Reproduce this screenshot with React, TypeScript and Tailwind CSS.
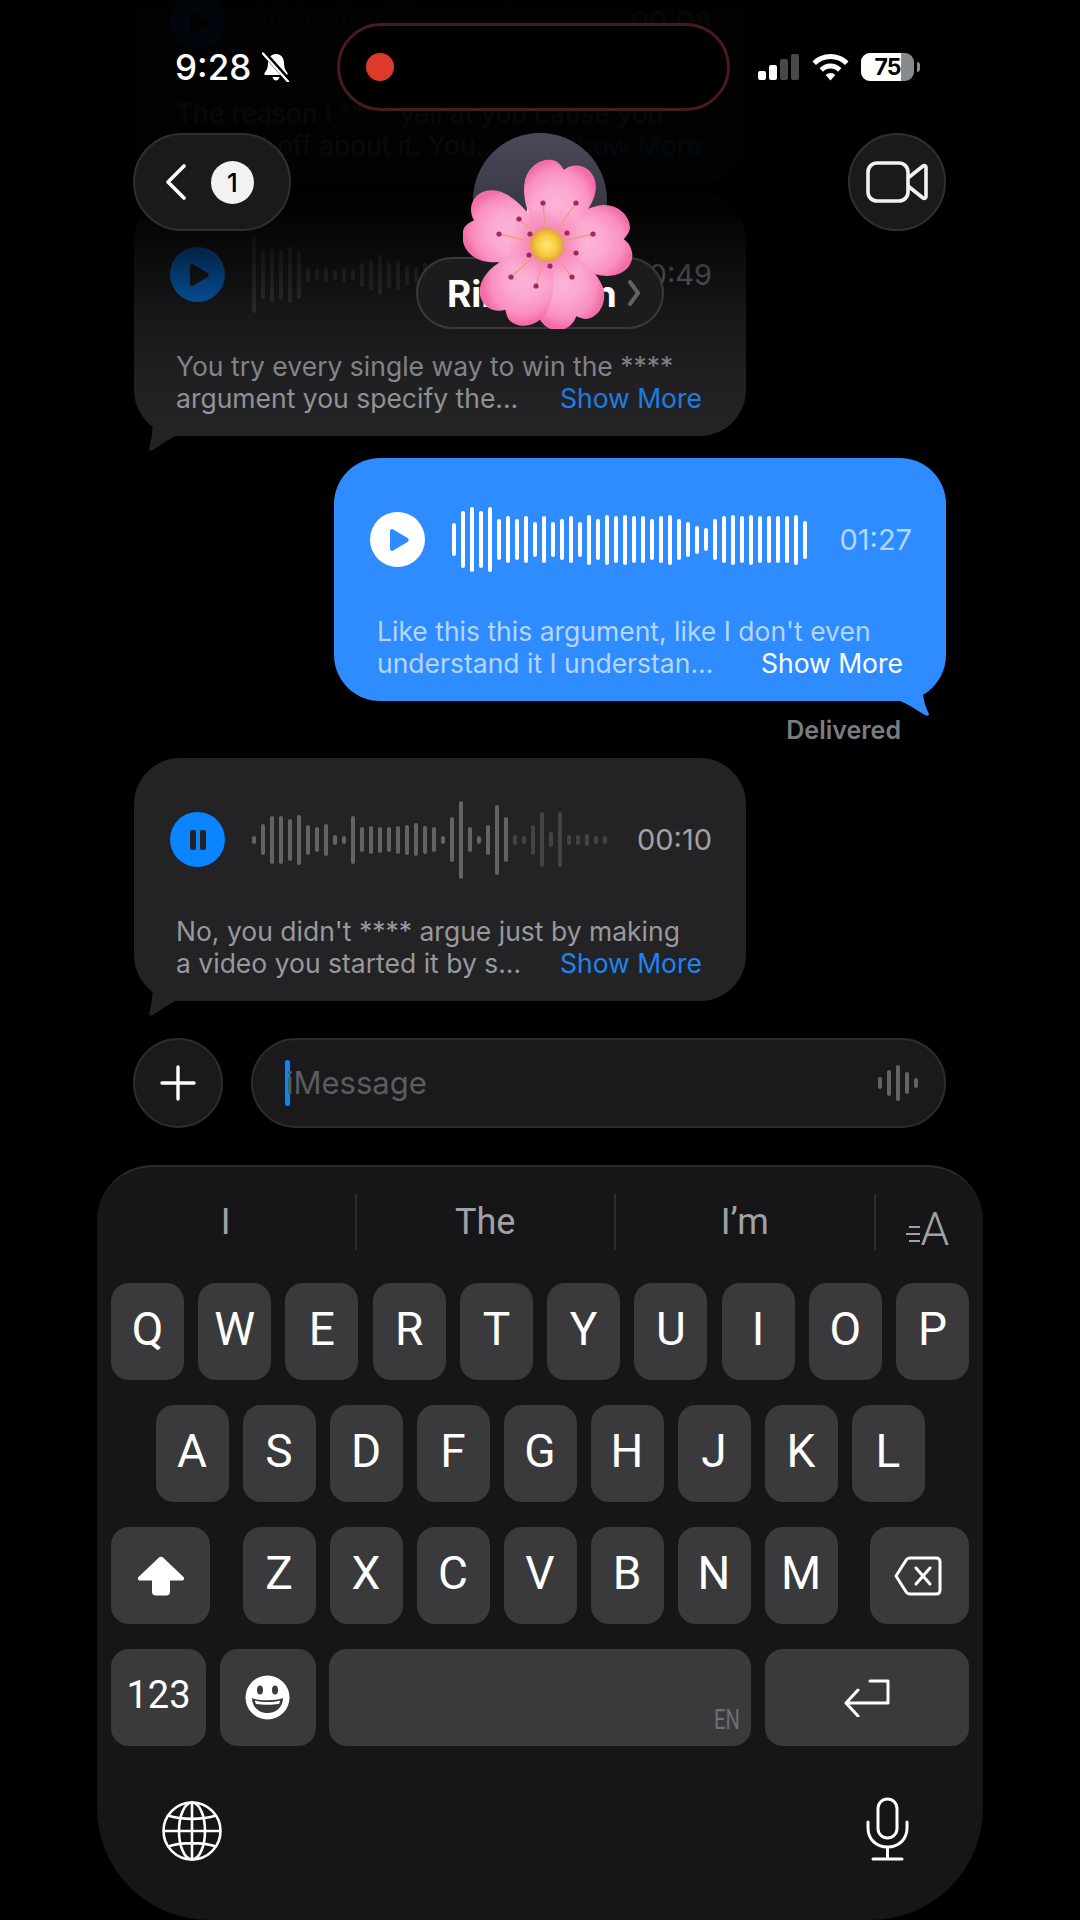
import React from 'react';

const WAVE_TOP = [18, 30, 24, 40, 22, 60, 18, 12, 10, 16, 70, 18, 12, 26, 14, 40, 30, 48, 22, 16, 14, 22, 12, 10, 16, 14, 10, 20, 48, 12, 10, 8, 12, 26, 10, 8, 8, 6];
const WAVE_DIM = [77, 48, 54, 50, 56, 48, 14, 12, 14, 10, 14, 12, 24, 30, 40, 26, 30, 20, 16, 24, 18, 14, 12, 22, 14, 16, 12, 18, 10, 14, 12, 20, 12, 14, 10, 14, 10, 12, 8, 8];
const WAVE_BLUE = [33, 57, 65, 57, 65, 41, 47, 41, 47, 35, 47, 35, 41, 47, 35, 50, 41, 50, 47, 50, 47, 47, 41, 47, 50, 41, 35, 28, 23, 41, 47, 50, 47, 50, 47, 47, 47, 47, 50, 38];
const WAVE_GREY = [8, 31, 48, 48, 42, 50, 30, 25, 32, 10, 8, 48, 25, 28, 26, 25, 28, 30, 33, 28, 25, 8, 45, 78, 25, 8, 30, 70, 45, 10, 8, 30, 55, 15, 55, 10, 10, 12, 8, 8];

function Waveform({ bars, barClass, fadeFrom }: { bars: number[]; barClass: string; fadeFrom?: number }) {
  return (
    <div className="flex items-center gap-[5px]">
      {bars.map((h, i) => (
        <div
          key={i}
          className={`w-[4px] shrink-0 rounded-full ${barClass} ${fadeFrom !== undefined && i >= fadeFrom ? 'opacity-50' : ''}`}
          style={{ height: h }}
        />
      ))}
    </div>
  );
}

function Tail({ side, colorClass }: { side: 'left' | 'right'; colorClass: string }) {
  if (side === 'left') {
    return (
      <svg className={`absolute left-[12px] bottom-[-15px] ${colorClass}`} width="34" height="40" viewBox="0 0 34 40" fill="currentColor">
        <path d="M6 0 C8 12 6 28 3 38 C3 40 5 40 7 39 C14 35 22 28 30 25 L34 0 Z" />
      </svg>
    );
  }
  return (
    <svg className={`absolute right-[14px] bottom-[-15px] ${colorClass}`} width="34" height="40" viewBox="0 0 34 40" fill="currentColor">
      <path d="M30 0 C26 8 24 16 26 24 C27 30 30 36 31 38 C31 40 29 40 27 39 C20 35 12 29 2 25 L0 0 Z" />
    </svg>
  );
}

function PlayIcon() {
  return (
    <svg width="22" height="24" viewBox="0 0 22 24" fill="currentColor">
      <path d="M2 3.2 C2 1.4 3.8 .6 5.2 1.4 L19.6 10 C21 10.9 21 13 19.6 13.9 L5.2 22.6 C3.8 23.4 2 22.6 2 20.8 Z" />
    </svg>
  );
}

function GreyBubble({
  bars,
  time,
  line1,
  line2,
  button,
  heightClass,
  fadeFrom,
  tail = true,
}: {
  bars: number[];
  time: string;
  line1: string;
  line2: string;
  button: React.ReactNode;
  heightClass: string;
  fadeFrom?: number;
  tail?: boolean;
}) {
  return (
    <div className={`relative w-[612px] ${heightClass} rounded-[46px] bg-[#232326] pl-[36px] pr-[34px] flex flex-col`}>
      <div className="flex items-center h-[163px]">
        {button}
        <div className="ml-[27px] w-[360px] overflow-hidden">
          <Waveform bars={bars} barClass="bg-[#636366]" fadeFrom={fadeFrom} />
        </div>
        <span className="ml-auto text-[29px] text-[#a1a1a6]">{time}</span>
      </div>
      <div className="pl-[6px] text-[26.5px] leading-[32px] text-[#98989d] mt-[-6px]">
        <div className="whitespace-nowrap">{line1}</div>
        <div className="flex justify-between pr-[10px] whitespace-nowrap">
          <span>{line2}</span>
          <span className="text-[#1f84f0]">Show More</span>
        </div>
      </div>
      {tail && <Tail side="left" colorClass="text-[#232326]" />}
    </div>
  );
}

function Flower() {
  // one petal pointing up from the centre, with a notch at the tip
  const petal = 'M0 4 C-10 -8 -36 -34 -35 -60 C-34 -76 -20 -86 -9 -84 C-5 -83 -2 -80 1 -77 C5 -82 12 -85 19 -84 C31 -82 38 -70 36 -56 C33 -34 12 -10 0 4 Z';
  const tips = [
    [-4, -42], [29, -42], [-28, -26], [-48, -11], [-17, -11], [20, -12], [46, -11],
    [29, 8], [-36, 32], [-11, 41], [25, 32], [3, 21], [-18, 10],
  ];
  return (
    <svg className="absolute left-[463px] top-[159px]" width="172" height="170" viewBox="-84 -86 172 170">
      <defs>
        <radialGradient id="petalFill" cx="0.5" cy="0.58" r="0.6">
          <stop offset="0" stopColor="#fdb6d8" />
          <stop offset="0.5" stopColor="#fca8d0" />
          <stop offset="0.82" stopColor="#f98fc0" />
          <stop offset="1" stopColor="#f36ea8" />
        </radialGradient>
        <radialGradient id="eyeFill">
          <stop offset="0" stopColor="#ffe873" />
          <stop offset="0.6" stopColor="#f6cb3d" />
          <stop offset="1" stopColor="#e0a040" />
        </radialGradient>
        <radialGradient id="baseShade">
          <stop offset="0" stopColor="#f0589a" stopOpacity="0.75" />
          <stop offset="1" stopColor="#f0589a" stopOpacity="0" />
        </radialGradient>
      </defs>
      {[288, 85, 157, 212, 12].map((a) => (
        <g key={a} transform={`rotate(${a})`}>
          <path d={petal} fill="url(#petalFill)" />
        </g>
      ))}
      <circle cx="0" cy="0" r="40" fill="url(#baseShade)" />
      {tips.map(([x, y], i) => (
        <g key={i}>
          <line x1="0" y1="0" x2={x} y2={y} stroke="#ee9a7e" strokeWidth="1.3" />
          <circle cx={x} cy={y} r="2.6" fill="#a2275f" />
        </g>
      ))}
      <circle cx="0" cy="0" r="17" fill="url(#eyeFill)" />
    </svg>
  );
}

function StatusBar() {
  return (
    <div className="absolute top-[23px] left-0 right-0 flex items-center h-[88px]">
      <div className="w-[337px] pl-[175px] flex items-center text-white">
        <span className="text-[35px] font-medium leading-none">9:28</span>
        <svg className="ml-[11px]" width="28" height="30" viewBox="0 0 28 30" fill="white">
          <path d="M14 2 C8.5 2 6 6.5 6 11 C6 15.5 5 18 2.5 21 C2 22 2.5 23 3.5 23 H24.5 C25.5 23 26 22 25.5 21 C23 18 22 15.5 22 11 C22 6.5 19.5 2 14 2 Z" />
          <path d="M10.5 25 H17.5 C17 27.5 15.5 28.5 14 28.5 C12.5 28.5 11 27.5 10.5 25 Z" />
          <path d="M2 1 L27 29" stroke="black" strokeWidth="5" />
          <path d="M1 1.5 L26 29.5" stroke="white" strokeWidth="2.4" strokeLinecap="round" />
        </svg>
      </div>
      <div className="w-[393px] h-[88px] rounded-full bg-black border-[3px] border-[#4a1a1e] flex items-center pl-[26px]">
        <div className="w-[28px] h-[28px] rounded-full bg-[#dd3a2c]" />
      </div>
      <div className="ml-[28px] flex items-center">
        <div className="flex items-end gap-[3px] h-[26px]">
          <div className="w-[8px] h-[9px] rounded-[2px] bg-white" />
          <div className="w-[8px] h-[15px] rounded-[2px] bg-white" />
          <div className="w-[8px] h-[21px] rounded-[2px] bg-[#48484a]" />
          <div className="w-[8px] h-[26px] rounded-[2px] bg-[#48484a]" />
        </div>
        <svg className="ml-[13px]" width="37" height="27" viewBox="0 0 37 27" fill="white">
          <path d="M18.5 0 C25.5 0 32 2.8 36.5 7.4 L33 11 C29.3 7.2 24.2 5 18.5 5 C12.8 5 7.7 7.2 4 11 L.5 7.4 C5 2.8 11.5 0 18.5 0 Z" />
          <path d="M18.5 9.6 C22.8 9.6 26.6 11.3 29.4 14.2 L26 17.7 C24.1 15.7 21.4 14.5 18.5 14.5 C15.6 14.5 12.9 15.7 11 17.7 L7.6 14.2 C10.4 11.3 14.2 9.6 18.5 9.6 Z" />
          <path d="M18.5 19 C20.4 19 22.1 19.8 23.3 21 L18.5 26.6 L13.7 21 C14.9 19.8 16.6 19 18.5 19 Z" />
        </svg>
        <div className="ml-[12px] relative w-[53px] h-[28px] rounded-[9px] bg-[#8a8a8e] overflow-hidden">
          <div className="absolute inset-y-0 left-0 w-[40px] bg-white" />
          <span className="absolute inset-0 flex items-center justify-center text-[23px] font-bold text-black leading-none tracking-[-1px]">75</span>
        </div>
        <div className="ml-[3px] w-[3px] h-[10px] rounded-r-full bg-[#8a8a8e]" />
      </div>
    </div>
  );
}

function NavBar() {
  return (
    <div className="absolute top-[133px] left-[133px] right-[134px] flex justify-between">
      <div className="w-[158px] h-[98px] rounded-full bg-[#1a1a1c] border-[2px] border-[#2f2f31] flex items-center pl-[30px]">
        <svg width="22" height="36" viewBox="0 0 22 36" fill="none" stroke="white" strokeWidth="3.6" strokeLinecap="round" strokeLinejoin="round">
          <path d="M19 2 L3 18 L19 34" />
        </svg>
        <div className="ml-[24px] w-[43px] h-[43px] rounded-full bg-[#f2f2f2] flex items-center justify-center text-[26px] text-black font-medium">1</div>
      </div>
      <div className="w-[98px] h-[98px] rounded-full bg-[#1a1a1c] border-[2px] border-[#2f2f31] flex items-center justify-center">
        <svg width="62" height="42" viewBox="0 0 62 42" fill="none" stroke="#f2f2f2" strokeWidth="3.6" strokeLinejoin="round">
          <rect x="2" y="2" width="40" height="38" rx="9" />
          <path d="M42 17 L57 5 C58.5 4 60 5 60 6.5 V35.5 C60 37 58.5 38 57 37 L42 25" />
        </svg>
      </div>
    </div>
  );
}

function Key({ label }: { label: string }) {
  return (
    <div className="w-[73px] h-[97px] pb-[6px] rounded-[18px] bg-[#3a3a3c] flex items-center justify-center text-[46px] text-white leading-none shrink-0">
      {label}
    </div>
  );
}

function IconKey({ className, children }: { className: string; children: React.ReactNode }) {
  return (
    <div className={`${className} relative h-[97px] rounded-[18px] bg-[#3a3a3c] flex items-center justify-center text-white shrink-0`}>
      {children}
    </div>
  );
}

function Keyboard() {
  return (
    <div className="mt-[37px] mx-auto w-[886px] flex-1 rounded-t-[56px] rounded-b-[112px] bg-[#161618] border-t-[2px] border-[#2c2c2e] font-['Roboto',sans-serif]">
      <div className="flex items-center pt-[26px] h-[83px] text-[36px] text-[#a1a1a6]">
        {['I', 'The', 'I’m'].map((w) => (
          <div key={w} className="w-[259.5px] h-[56px] border-r-[2px] border-[#2c2c2e] flex items-center justify-center">{w}</div>
        ))}
        <div className="ml-[30px] flex items-end mt-[14px]">
          <div className="flex flex-col gap-[5px] mb-[5px] mr-[1px]">
            <div className="w-[11px] h-[2px] ml-[3px] bg-[#a1a1a6]" />
            <div className="w-[14px] h-[2px] bg-[#a1a1a6]" />
            <div className="w-[11px] h-[2px] ml-[3px] bg-[#a1a1a6]" />
          </div>
          <span className="text-[46px] leading-[36px] font-light">A</span>
        </div>
      </div>
      <div className="px-[14px] pt-[33px] flex flex-col gap-[25px]">
        <div className="flex justify-between">
          {'QWERTYUIOP'.split('').map((k) => <Key key={k} label={k} />)}
        </div>
        <div className="flex justify-center gap-[14px]">
          {'ASDFGHJKL'.split('').map((k) => <Key key={k} label={k} />)}
        </div>
        <div className="flex justify-between">
          <IconKey className="w-[99px]">
            <svg width="48" height="40" viewBox="0 0 48 40" fill="white">
              <path d="M22 1.5 C23 .4 25 .4 26 1.5 L46.5 21 C47.8 22.3 47 24.5 45 24.5 H33 V36 C33 38 31.5 39.5 29.5 39.5 H18.5 C16.5 39.5 15 38 15 36 V24.5 H3 C1 24.5 .2 22.3 1.5 21 Z" />
            </svg>
          </IconKey>
          <div className="flex gap-[14px]">
            {'ZXCVBNM'.split('').map((k) => <Key key={k} label={k} />)}
          </div>
          <IconKey className="w-[99px]">
            <svg className="mr-[4px]" width="48" height="40" viewBox="0 0 48 40" fill="none" stroke="white" strokeWidth="3" strokeLinecap="round" strokeLinejoin="round">
              <path d="M16 2 H42 C44.5 2 46 3.5 46 6 V34 C46 36.5 44.5 38 42 38 H16 C14.5 38 13.5 37.5 12.5 36.5 L2 20 L12.5 3.5 C13.5 2.5 14.5 2 16 2 Z" />
              <path d="M22 12 L36 28 M36 12 L22 28" />
            </svg>
          </IconKey>
        </div>
        <div className="flex justify-between">
          <div className="w-[95px] h-[97px] pb-[4px] rounded-[18px] bg-[#3a3a3c] flex items-center justify-center text-[38px] text-white">123</div>
          <IconKey className="w-[96px]">
            <svg width="45" height="45" viewBox="0 0 45 45">
              <circle cx="22.5" cy="22.5" r="22" fill="white" />
              <ellipse cx="15" cy="15" rx="3" ry="4.5" fill="#3a3a3c" />
              <ellipse cx="30" cy="15" rx="3" ry="4.5" fill="#3a3a3c" />
              <path d="M7 23 C14 26 31 26 38 23 C38 32 31 38 22.5 38 C14 38 7 32 7 23 Z" fill="#3a3a3c" />
              <path d="M10 25.5 C17 27.5 28 27.5 35 25.5 C35 27 34.5 28 34 29 C27 30 18 30 11 29 C10.5 28 10 27 10 25.5 Z" fill="white" />
            </svg>
          </IconKey>
          <div className="relative w-[422px] h-[97px] rounded-[18px] bg-[#3a3a3c]">
            <span className="absolute right-[6px] bottom-[12px] text-[28px] leading-none text-[#6e6e73] scale-x-[0.72]">EN</span>
          </div>
          <IconKey className="w-[204px]">
            <svg width="46" height="38" viewBox="0 0 46 38" fill="none" stroke="white" strokeWidth="3" strokeLinecap="round" strokeLinejoin="round">
              <path d="M26 2 H44 V24 H2 M14 11 L2 24 L14 37" />
            </svg>
          </IconKey>
        </div>
      </div>
      <div className="flex justify-between items-start pl-[65px] pr-[74px] mt-[51px]">
        <svg className="mt-[4px]" width="60" height="60" viewBox="0 0 60 60" fill="none" stroke="white" strokeWidth="2.6">
          <circle cx="30" cy="30" r="28.5" />
          <ellipse cx="30" cy="30" rx="13" ry="28.5" />
          <path d="M30 1.5 V58.5 M1.5 30 H58.5 M6 14.5 C20 19 40 19 54 14.5 M6 45.5 C20 41 40 41 54 45.5" />
        </svg>
        <svg width="43" height="64" viewBox="0 0 43 64" fill="none" stroke="white" strokeWidth="3" strokeLinecap="round">
          <rect x="12" y="2" width="19" height="39" rx="9.5" />
          <path d="M2 25 V31 C2 42 10 50 21.5 50 C33 50 41 42 41 31 V25 M21.5 50 V61 M7 62 H36" />
        </svg>
      </div>
    </div>
  );
}

export default function App() {
  return (
    <div className="relative w-[1080px] h-[1920px] overflow-hidden bg-black flex flex-col font-['Inter','Liberation_Sans',sans-serif]">
      <div className="pl-[134px] pr-[134px] mt-[-60px] flex flex-col">
        <GreyBubble
          bars={WAVE_TOP}
          time="00:08"
          line1="The reason I **** yell at you cause you"
          line2="you get off about it. You..."
          heightClass="h-[243px]"
          fadeFrom={0}
          tail={false}
          button={
            <div className="w-[55px] h-[55px] shrink-0 rounded-full bg-[#0a84ff] flex items-center justify-center text-[#232326] pl-[3px]">
              <PlayIcon />
            </div>
          }
        />
        <div className="mt-[10px]">
          <GreyBubble
            bars={WAVE_DIM}
            time="00:49"
            line1="You try every single way to win the ****"
            line2="argument you specify the..."
            heightClass="h-[243px]"
            fadeFrom={0}
            button={
              <div className="w-[55px] h-[55px] shrink-0 rounded-full bg-[#0a84ff] flex items-center justify-center text-[#232326] pl-[3px]">
                <PlayIcon />
              </div>
            }
          />
        </div>

        <div className="relative self-end w-[612px] h-[243px] mt-[22px] rounded-[46px] bg-[#2f8cff] pl-[36px] pr-[34px] flex flex-col">
          <div className="flex items-center h-[163px]">
            <div className="w-[55px] h-[55px] shrink-0 rounded-full bg-white flex items-center justify-center text-[#2f8cff] pl-[3px]">
              <PlayIcon />
            </div>
            <div className="ml-[27px]">
              <Waveform bars={WAVE_BLUE} barClass="bg-white" />
            </div>
            <span className="ml-auto text-[29px] text-[#b5d6ff]">01:27</span>
          </div>
          <div className="pl-[7px] text-[26.5px] leading-[32px] text-[#b5d6ff] mt-[-6px]">
            <div className="whitespace-nowrap">Like this this argument, like I don't even</div>
            <div className="flex justify-between pr-[9px] whitespace-nowrap">
              <span>understand it I understan...</span>
              <span className="text-white">Show More</span>
            </div>
          </div>
          <Tail side="right" colorClass="text-[#2f8cff]" />
        </div>
        <div className="self-end pr-[45px] mt-[16px] h-[41px] text-[25px] font-semibold text-[#7c7c80] leading-[26px]">Delivered</div>

        <GreyBubble
          bars={WAVE_GREY}
          time="00:10"
          line1="No, you didn't **** argue just by making"
          line2="a video you started it by s..."
          heightClass="h-[243px]"
          fadeFrom={29}
          button={
            <div className="w-[55px] h-[55px] shrink-0 rounded-full bg-[#0a84ff] flex items-center justify-center gap-[4px]">
              <div className="w-[6px] h-[20px] rounded-[2px] bg-[#232326]" />
              <div className="w-[6px] h-[20px] rounded-[2px] bg-[#232326]" />
            </div>
          }
        />
      </div>

      <div className="pl-[133px] pr-[134px] mt-[37px] flex gap-[28px]">
        <div className="w-[90px] h-[90px] rounded-full bg-[#1a1a1c] border-[2px] border-[#2c2c2e] flex items-center justify-center shrink-0">
          <svg width="36" height="36" viewBox="0 0 36 36" stroke="white" strokeWidth="3.4" strokeLinecap="round">
            <path d="M18 2 V34 M2 18 H34" />
          </svg>
        </div>
        <div className="flex-1 h-[90px] rounded-full bg-[#1a1a1c] border-[2px] border-[#2c2c2e] flex items-center pl-[32px] pr-[26px]">
          <div className="w-[5px] h-[46px] rounded-full bg-[#0a84ff]" />
          <span className="text-[31px] text-[#5c5c60] ml-[-4px]">iMessage</span>
          <div className="ml-auto flex items-center gap-[5px]">
            <div className="w-[4px] h-[12px] rounded-full bg-[#636366]" />
            <div className="w-[4px] h-[26px] rounded-full bg-[#636366]" />
            <div className="w-[4px] h-[36px] rounded-full bg-[#636366]" />
            <div className="w-[4px] h-[22px] rounded-full bg-[#636366]" />
            <div className="w-[4px] h-[10px] rounded-full bg-[#636366]" />
          </div>
        </div>
      </div>

      <Keyboard />

      {/* top fade over the scrolled messages */}
      <div className="absolute top-0 left-0 right-0 h-[420px] bg-[linear-gradient(to_bottom,rgba(0,0,0,0.96)_0%,rgba(0,0,0,0.93)_50%,rgba(0,0,0,0.6)_65%,rgba(0,0,0,0.35)_75%,rgba(0,0,0,0.1)_90%,rgba(0,0,0,0)_100%)]" />

      <StatusBar />
      <NavBar />

      <div className="absolute left-[473px] top-[133px] w-[134px] h-[134px] rounded-full bg-[linear-gradient(to_bottom,#4b495a,#2a2a33)] flex justify-center pt-[36px]">
        <span className="text-[60px] font-bold text-white leading-none">L</span>
      </div>
      <div className="absolute left-[416px] top-[257px] w-[248px] h-[72px] rounded-full bg-[#1c1c1e] border-[2px] border-[#3a3a3c] flex items-center pl-[29px] pr-[22px]">
        <span className="text-[37px] font-bold text-white leading-none whitespace-nowrap">Rikki Ann</span>
        <svg className="ml-auto" width="12" height="26" viewBox="0 0 12 26" fill="none" stroke="#636366" strokeWidth="4" strokeLinecap="round" strokeLinejoin="round">
          <path d="M2 2 L10 13 L2 24" />
        </svg>
      </div>
      <Flower />
    </div>
  );
}
